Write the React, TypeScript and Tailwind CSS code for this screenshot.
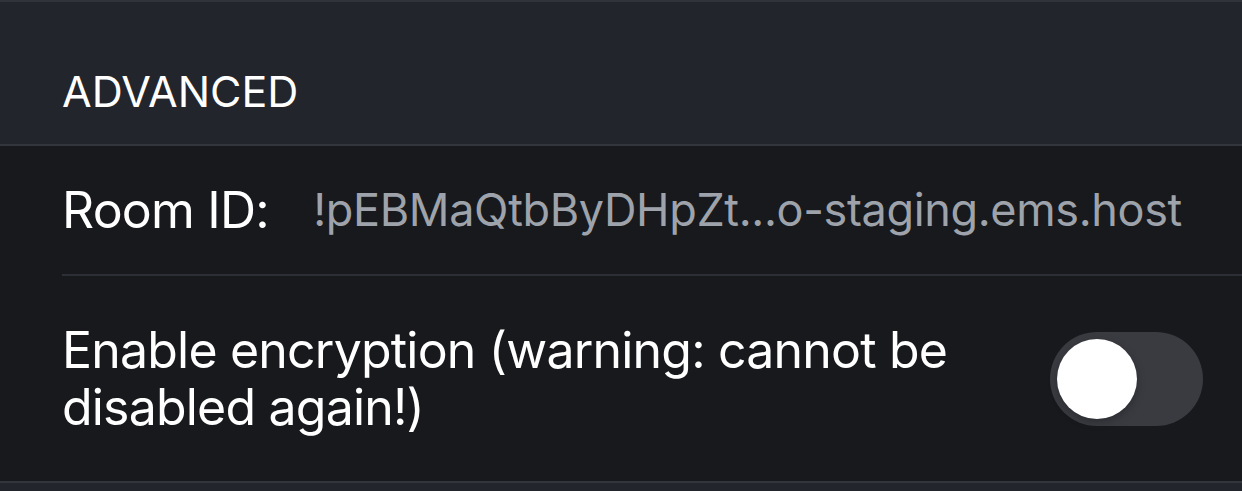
import { useState } from "react";

const App = () => {
  const [encrypted, setEncrypted] = useState(false);

  return (
    <div
      className="w-[1242px] h-[491px] overflow-hidden bg-[#22252b] text-white"
      style={{ fontFamily: "Inter, 'Noto Sans', sans-serif" }}
    >
      {/* Section header */}
      <div className="h-[146px] border-t-2 border-[#30333a] border-b-2 border-b-[#33363d] flex items-end px-[62px] pb-[31px]">
        <span className="text-[43px] leading-none">ADVANCED</span>
      </div>

      <div className="bg-[#17191d]">
        {/* Room ID */}
        <div className="pl-[62px]">
          <div className="h-[130px] flex items-center justify-between pr-[60px] border-b-2 border-[#2c2f35]">
            <span className="text-[50px] tracking-[-0.8px]">Room ID:</span>
            <span className="text-[45px] tracking-[-0.35px] text-[#9ea3ab]">
              !pEBMaQtbByDHpZt...o-staging.ems.host
            </span>
          </div>
        </div>

        {/* Encryption toggle */}
        <div className="h-[207px] flex items-center justify-between pl-[62px] pr-[39px] border-b-2 border-[#33363d]">
          <p className="text-[50px] tracking-[-0.8px] leading-[57px] w-[960px]">
            Enable encryption (warning: cannot be disabled again!)
          </p>
          <button
            onClick={() => setEncrypted(!encrypted)}
            className={`w-[153px] h-[94px] shrink-0 rounded-full p-[7px] flex ${
              encrypted ? "bg-[#34c759] justify-end" : "bg-[#393b41] justify-start"
            }`}
          >
            <span className="w-[80px] h-[80px] rounded-full bg-white shadow-[0_3px_8px_rgba(0,0,0,0.25)]" />
          </button>
        </div>
      </div>
    </div>
  );
};

export default App;
